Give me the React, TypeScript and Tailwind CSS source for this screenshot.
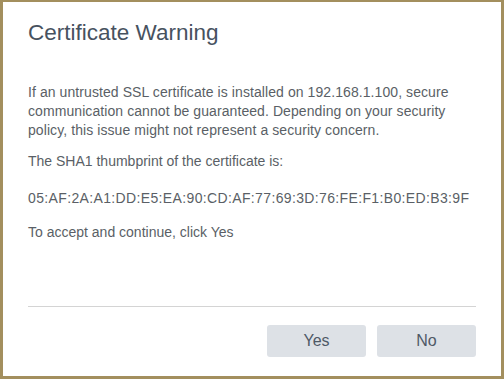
export default function App() {
  return (
    <div className="w-[504px] h-[379px] bg-[#a38f5e] pt-[2px] pl-[3px] pr-[3px] pb-[3px]" style={{ fontFamily: '"Liberation Sans", Arial, sans-serif' }}>
      <div className="h-full bg-white flex flex-col px-[25px]">
        <h1 className="text-[22.5px] leading-none text-[#47525f] mt-[20px]">Certificate Warning</h1>
        <div className="mt-[38px] text-[14px] leading-[19px] text-[#5a5f66]">
          <p className="tracking-[0.08px]">
            If an untrusted SSL certificate is installed on 192.168.1.100, secure communication cannot be guaranteed. Depending on your security policy, this issue might not represent a security concern.
          </p>
          <p className="mt-[12px]">The SHA1 thumbprint of the certificate is:</p>
          <p className="mt-[18px] tracking-[0.36px]">05:AF:2A:A1:DD:E5:EA:90:CD:AF:77:69:3D:76:FE:F1:B0:ED:B3:9F</p>
          <p className="mt-[15px]">To accept and continue, click Yes</p>
        </div>
        <div className="mt-auto border-t border-[#d4d4d4]" />
        <div className="flex justify-end gap-[11px] pt-[18px] pb-[19px]">
          <button className="w-[99px] h-[32px] rounded-[3px] bg-[#dde1e6] text-[16px] text-[#4f5966]">Yes</button>
          <button className="w-[99px] h-[32px] rounded-[3px] bg-[#dde1e6] text-[16px] text-[#4f5966]">No</button>
        </div>
      </div>
    </div>
  );
}
